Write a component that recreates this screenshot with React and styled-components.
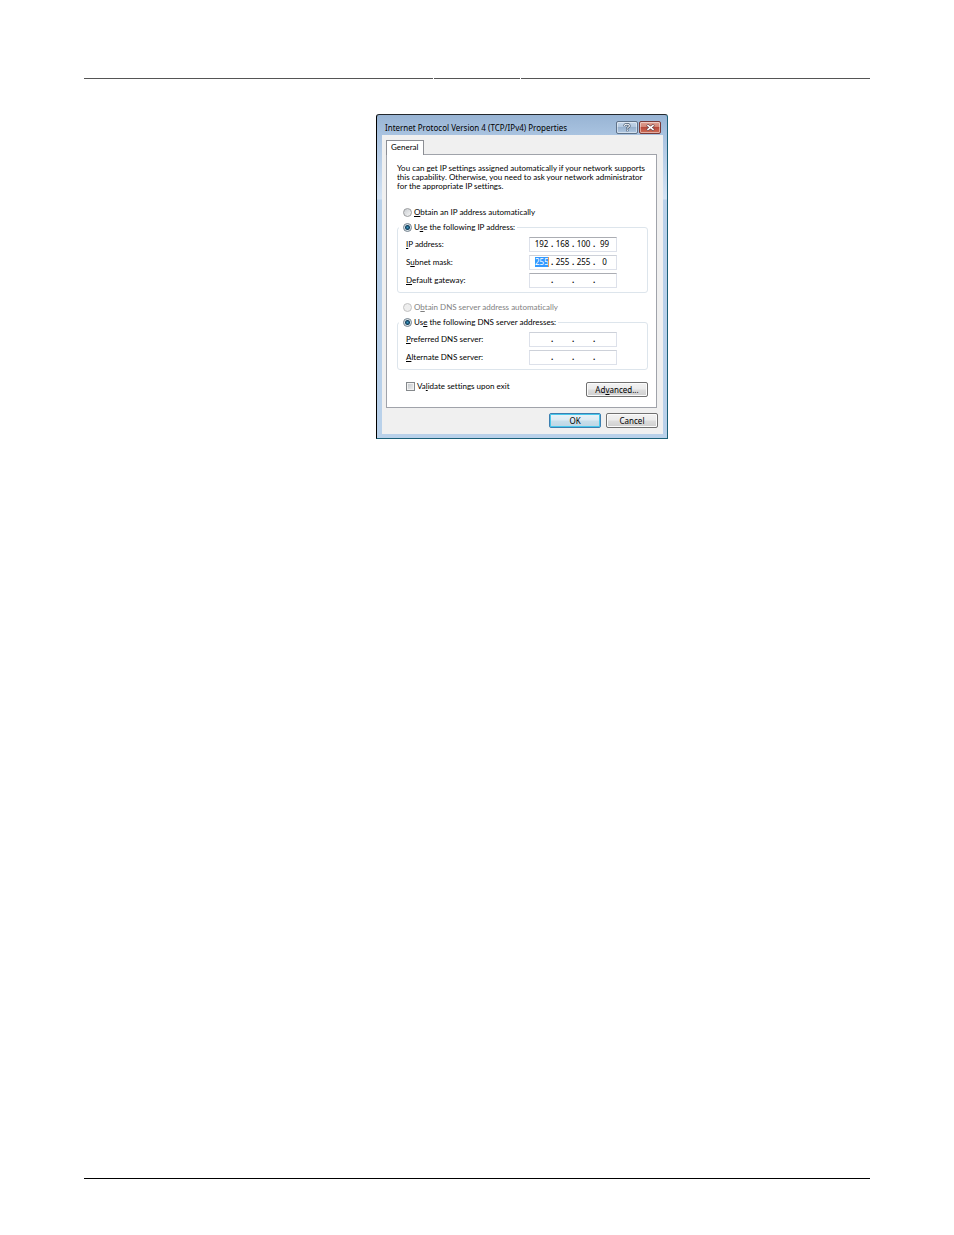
import { useState } from "react";
import styled, { createGlobalStyle, css } from "styled-components";

const GlobalStyle = createGlobalStyle`
    * {
        box-sizing: border-box;
    }

    body {
        margin: 0;
        background: #ffffff;
        color: #000000;
        font-family: Lato, "Noto Sans", sans-serif;
        font-size: 8px;
        line-height: 9px;
        font-variant-ligatures: none;
    }

    button,
    input {
        font: inherit;
        color: inherit;
        margin: 0;
        padding: 0;
    }
`;

const Page = styled.div`
    display: flex;
    flex-direction: column;
    min-height: 100vh;
    padding: 78px 84px 56px;
`;

const HeaderRule = styled.header`
    display: grid;
    grid-template-columns: 1fr 86px 1fr;
    gap: 1px;

    span {
        height: 1px;
        background: #555555;
    }
`;

const FooterRule = styled.footer`
    height: 1px;
    margin-top: auto;
    background: #000000;
`;

const Main = styled.main`
    padding: 35px 0 0 292px;
`;

const Dialog = styled.section`
    width: 292px;
    max-width: 100%;
    padding: 0 4px 4px 5px;
    border: 1px solid #1b6078;
    border-top-color: #23292e;
    border-left-color: #000000;
    border-radius: 3px 3px 0 0;
    background: linear-gradient(#98b4d4 0, #a9c3e0 20px, #d3e3f4 84px, #b9d1ea 85px);
`;

const TitleBar = styled.div`
    display: flex;
    align-items: center;
    gap: 1px;
    padding: 6px 2px 1px 3px;

    h1 {
        flex: 1;
        margin: 0;
        font-family: "Noto Sans", sans-serif;
        font-size: 8px;
        font-weight: 400;
        white-space: nowrap;
    }
`;

const CaptionButton = styled.button`
    display: flex;
    align-items: center;
    justify-content: center;
    width: 22px;
    height: 13px;
    border: 1px solid ${({ $close }) => ($close ? "#7a3a38" : "#5f7289")};
    border-radius: 2px;
    box-shadow: inset 0 0 0 1px rgba(255, 255, 255, 0.45);
    background: ${({ $close }) =>
        $close
            ? "linear-gradient(#e0a092 0, #d28575 45%, #b8493a 50%, #cf6f58 100%)"
            : "linear-gradient(#c3d5e9 0, #b3c8e0 45%, #98b2cf 50%, #b0c8e2 100%)"};
`;

const Client = styled.div`
    padding: 5px 5px 6px;
    background: #f0f0f0;
`;

const Tab = styled.button`
    display: block;
    position: relative;
    height: 15px;
    margin-bottom: -1px;
    padding: 0 5px 1px 4px;
    border: 1px solid #8c8e94;
    border-bottom: 0;
    background: #ffffff;
`;

const Panel = styled.div`
    margin-left: -1px;
    padding: 9px 8px 10px 10px;
    border: 1px solid #a0a3aa;
    background: #ffffff;
`;

const TabArea = styled.div`
    padding-right: 1px;

    ${Tab} {
        margin-left: -1px;
    }
`;

const Intro = styled.p`
    margin: 0 0 15px;
    white-space: nowrap;
`;

const Choice = styled.label`
    display: flex;
    align-items: center;
    gap: 2px;
    height: 12px;
    padding-left: ${({ $indent }) => $indent || 0}px;
    color: ${({ $disabled }) => ($disabled ? "#7f7f7f" : "inherit")};
    white-space: nowrap;
`;

const Radio = styled.input`
    appearance: none;
    flex: none;
    width: 9px;
    height: 9px;
    border: 1px solid #9a9c9e;
    border-radius: 50%;
    background: linear-gradient(135deg, #c9cdd1, #f6f6f6);

    &:checked {
        border-color: #71808c;
        background: radial-gradient(circle, #3d9cc4 0, #14405f 2px, #d8e2e8 3px, #f4f4f4 4px);
    }

    &:disabled {
        border-color: #c2c2c2;
        background: #eeeeee;
    }
`;

const Checkbox = styled.input`
    appearance: none;
    flex: none;
    width: 9px;
    height: 9px;
    border: 1px solid #85898c;
    box-shadow: inset 0 0 0 1px #f2f2f2;
    background: linear-gradient(135deg, #bfc4c9, #f1f1f1);

    &:checked {
        background: #3a6ea5;
    }
`;

const Group = styled.fieldset`
    min-width: 0;
    margin: 3px 0 8px;
    padding: 2px 30px 3px 8px;
    border: 1px solid #dde5ec;
    border-radius: 3px;

    &:last-of-type {
        margin-bottom: 12px;
    }

    legend {
        margin-left: -7px;
        padding: 0 2px 0 4px;
    }
`;

const Row = styled.div`
    display: flex;
    align-items: center;
    justify-content: space-between;
    height: 18px;
`;

const AddressBox = styled.div`
    display: flex;
    align-items: center;
    width: 88px;
    height: 15px;
    padding: 0 3px 1px;
    border: 1px solid #dde1ea;
    border-top-color: ${({ $soft }) => ($soft ? "#cdd1d9" : "#abadb3")};
    background: #ffffff;
    font-family: "Noto Sans", sans-serif;

    span {
        width: 4px;
        font-weight: 700;
        text-align: center;
    }
`;

const Octet = styled.input`
    width: 17px;
    height: 10px;
    border: 0;
    outline: 0;
    background: transparent;
    text-align: center;

    ${({ $selected }) =>
        $selected &&
        css`
            width: 14px;
            margin: 0 1px 0 2px;
            border-right: 1px solid #e09a5a;
            background: #3399ff;
            color: #ffffff;
        `}
`;

const BottomRow = styled.div`
    display: flex;
    align-items: flex-start;
    justify-content: space-between;
    padding-left: 9px;

    ${Choice} {
        height: 9px;
    }
`;

const PushButton = styled.button`
    width: ${({ $wide }) => ($wide ? 62 : 52)}px;
    height: 15px;
    border: 1px solid #707070;
    border-radius: 2px;
    box-shadow: inset 0 0 0 1px #fbfbfb;
    background: linear-gradient(#f2f2f2 0, #ebebeb 48%, #dddddd 52%, #cfcfcf 100%);
    font-family: "Noto Sans", sans-serif;

    ${({ $default }) =>
        $default &&
        css`
            border-color: #3c7fb1;
            box-shadow: inset 0 0 0 1px #48c8ec;
            background: linear-gradient(#eaf3f8 0, #dcebf3 48%, #c8dfeb 52%, #bdd6e4 100%);
        `}
`;

const Actions = styled.div`
    display: flex;
    justify-content: flex-end;
    gap: 5px;
    padding-top: 5px;
`;

const AddressField = ({ id, label, initial, selected, soft }) => {
    const [octets, setOctets] = useState(initial);

    const changeOctet = (index, value) => {
        setOctets(octets.map((octet, i) => (i === index ? value : octet)));
    };

    return (
        <Row>
            <label htmlFor={`${id}-0`}>{label}</label>
            <AddressBox $soft={soft}>
                {octets.map((octet, index) => [
                    index > 0 && <span key={`dot-${index}`}>.</span>,
                    <Octet
                        key={index}
                        id={`${id}-${index}`}
                        aria-label={index > 0 ? `Octet ${index + 1}` : undefined}
                        maxLength={3}
                        value={octet}
                        $selected={selected === index}
                        onChange={(event) => changeOctet(index, event.target.value)}
                    />,
                ])}
            </AddressBox>
        </Row>
    );
};

const EMPTY = ["", "", "", ""];

export default function App() {
    const [ipMode, setIpMode] = useState("manual");
    const [dnsMode, setDnsMode] = useState("manual");
    const [validate, setValidate] = useState(false);

    return (
        <>
            <GlobalStyle />
            <Page>
                <HeaderRule>
                    <span />
                    <span />
                    <span />
                </HeaderRule>
                <Main>
                    <Dialog role="dialog" aria-labelledby="dialog-title">
                        <TitleBar>
                            <h1 id="dialog-title">Internet Protocol Version 4 (TCP/IPv4) Properties</h1>
                            <CaptionButton type="button" aria-label="Help">
                                <svg width="8" height="9" viewBox="0 0 8 9" fill="none">
                                    <path d="M1.6 3.2V2.6C1.6 1.6 2.6 1.2 4 1.2S6.4 1.7 6.4 2.9C6.4 4.3 4.3 4 4.3 5.8M4.3 6.6V8.2" stroke="#465568" strokeWidth="2.4" />
                                    <path d="M1.6 3V2.6C1.6 1.6 2.6 1.2 4 1.2S6.4 1.7 6.4 2.9C6.4 4.3 4.3 4 4.3 5.6M4.3 6.8V8" stroke="#f4f7fa" strokeWidth="1.1" />
                                </svg>
                            </CaptionButton>
                            <CaptionButton type="button" aria-label="Close" $close>
                                <svg width="9" height="7" viewBox="0 0 9 7" fill="none">
                                    <path d="M1 0.8L8 6.2M8 0.8L1 6.2" stroke="#6b4448" strokeWidth="2.8" />
                                    <path d="M1.4 1.1L7.6 5.9M7.6 1.1L1.4 5.9" stroke="#ffffff" strokeWidth="1.5" />
                                </svg>
                            </CaptionButton>
                        </TitleBar>
                        <Client>
                            <TabArea>
                                <Tab type="button" role="tab" aria-selected="true">General</Tab>
                                <Panel role="tabpanel">
                                    <Intro>
                                        You can get IP settings assigned automatically if your network supports
                                        <br />
                                        this capability. Otherwise, you need to ask your network administrator
                                        <br />
                                        for the appropriate IP settings.
                                    </Intro>

                                    <Choice $indent={6}>
                                        <Radio type="radio" name="ip" checked={ipMode === "auto"} onChange={() => setIpMode("auto")} />
                                        <span><u>O</u>btain an IP address automatically</span>
                                    </Choice>
                                    <Group>
                                        <legend>
                                            <Choice>
                                                <Radio type="radio" name="ip" checked={ipMode === "manual"} onChange={() => setIpMode("manual")} />
                                                <span>U<u>s</u>e the following IP address:</span>
                                            </Choice>
                                        </legend>
                                        <AddressField id="ip-address" label={<><u>I</u>P address:</>} initial={["192", "168", "100", "99"]} />
                                        <AddressField id="subnet" label={<>S<u>u</u>bnet mask:</>} initial={["255", "255", "255", "0"]} selected={0} soft />
                                        <AddressField id="gateway" label={<><u>D</u>efault gateway:</>} initial={EMPTY} />
                                    </Group>

                                    <Choice $indent={6} $disabled>
                                        <Radio type="radio" name="dns" disabled checked={dnsMode === "auto"} onChange={() => setDnsMode("auto")} />
                                        <span>O<u>b</u>tain DNS server address automatically</span>
                                    </Choice>
                                    <Group>
                                        <legend>
                                            <Choice>
                                                <Radio type="radio" name="dns" checked={dnsMode === "manual"} onChange={() => setDnsMode("manual")} />
                                                <span>Us<u>e</u> the following DNS server addresses:</span>
                                            </Choice>
                                        </legend>
                                        <AddressField id="dns-preferred" label={<><u>P</u>referred DNS server:</>} initial={EMPTY} soft />
                                        <AddressField id="dns-alternate" label={<><u>A</u>lternate DNS server:</>} initial={EMPTY} soft />
                                    </Group>

                                    <BottomRow>
                                        <Choice>
                                            <Checkbox type="checkbox" checked={validate} onChange={(event) => setValidate(event.target.checked)} />
                                            <span>Va<u>l</u>idate settings upon exit</span>
                                        </Choice>
                                        <PushButton type="button" $wide>Ad<u>v</u>anced...</PushButton>
                                    </BottomRow>
                                </Panel>
                            </TabArea>
                            <Actions>
                                <PushButton type="button" $default>OK</PushButton>
                                <PushButton type="button">Cancel</PushButton>
                            </Actions>
                        </Client>
                    </Dialog>
                </Main>
                <FooterRule />
            </Page>
        </>
    );
}
